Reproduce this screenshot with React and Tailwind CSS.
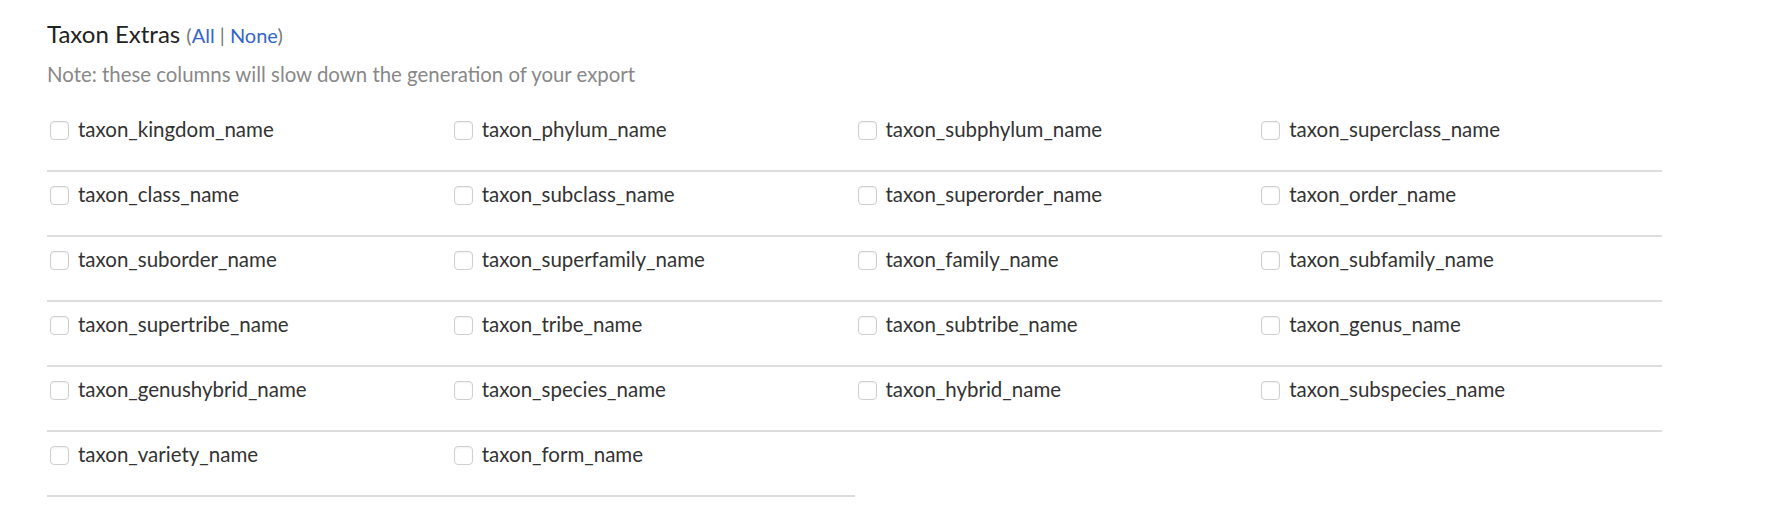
import React from "react";

const names = [
  "taxon_kingdom_name", "taxon_phylum_name", "taxon_subphylum_name", "taxon_superclass_name",
  "taxon_class_name", "taxon_subclass_name", "taxon_superorder_name", "taxon_order_name",
  "taxon_suborder_name", "taxon_superfamily_name", "taxon_family_name", "taxon_subfamily_name",
  "taxon_supertribe_name", "taxon_tribe_name", "taxon_subtribe_name", "taxon_genus_name",
  "taxon_genushybrid_name", "taxon_species_name", "taxon_hybrid_name", "taxon_subspecies_name",
  "taxon_variety_name", "taxon_form_name",
];

export default function App() {
  return (
    <div className="min-h-[524px] w-[1782px] bg-white pl-[47px] pt-[19px] text-[#333]" style={{ fontFamily: "Lato, 'Open Sans', sans-serif" }}>
      <h3 className="text-[24px] leading-[30px] text-[#222]">
        Taxon Extras{" "}
        <span className="text-[20px] text-[#777]">
          (<a className="text-[#3366cc]">All</a> | <a className="text-[#3366cc]">None</a>)
        </span>
      </h3>
      <p className="mt-[12px] text-[20.4px] leading-[24px] text-[#888]">
        Note: these columns will slow down the generation of your export
      </p>
      <div className="mt-[21px] grid w-[1615px] grid-cols-4">
        {names.map((n) => (
          <label key={n} className="flex h-[65px] items-start gap-[9px] border-b-2 border-[#dddddd] pl-[3px] pt-[11px]">
            <span className="mt-[3px] h-[19px] w-[19px] shrink-0 rounded-[4px] border border-[#cfcfcf] bg-white shadow-[inset_0_1px_2px_rgba(0,0,0,0.06)]" />
            <span className="text-[20.5px] leading-[22px] text-[#333]">{n}</span>
          </label>
        ))}
      </div>
    </div>
  );
}
